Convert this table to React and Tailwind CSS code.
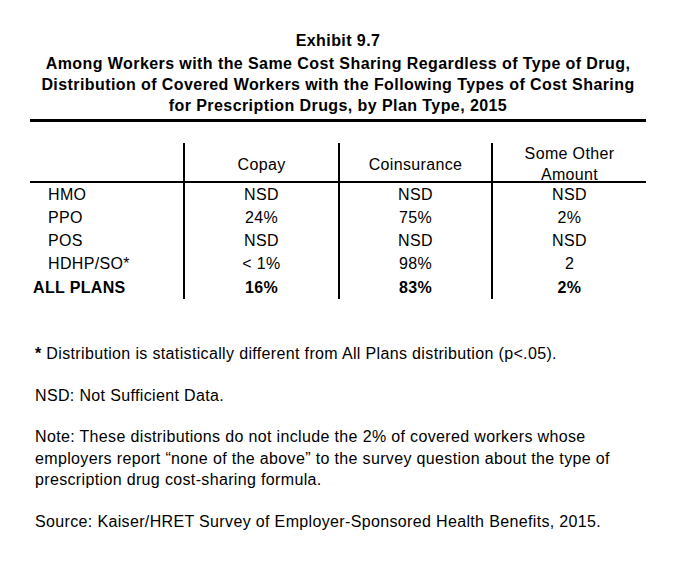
import React from "react";

const rows = [
  { label: "HMO", copay: "NSD", coins: "NSD", other: "NSD" },
  { label: "PPO", copay: "24%", coins: "75%", other: "2%" },
  { label: "POS", copay: "NSD", coins: "NSD", other: "NSD" },
  { label: "HDHP/SO*", copay: "< 1%", coins: "98%", other: "2" },
];

const App = () => {
  return (
    <div
      className="w-[698px] h-[580px] bg-white text-black"
      style={{ fontFamily: '"Liberation Sans", Arial, sans-serif' }}
    >
      <div className="w-[616px] ml-[30px] pt-[30px]">
        {/* Title */}
        <div className="text-center font-bold text-[16px] tracking-[0.42px] leading-[21px]">
          <div>Exhibit 9.7</div>
          <div className="mt-[2px]">
            Among Workers with the Same Cost Sharing Regardless of Type of Drug,
          </div>
          <div>
            Distribution of Covered Workers with the Following Types of Cost Sharing
          </div>
          <div>for Prescription Drugs, by Plan Type, 2015</div>
        </div>
        <div className="mt-[3px] border-t-[3px] border-black" />

        {/* Table */}
        <div className="mt-[21px] text-[16px] tracking-[0.35px] leading-[21px]">
          <div className="grid grid-cols-[153px_155px_153px_155px] h-[40px] border-b-2 border-black">
            <div />
            <div className="border-l-2 border-black flex items-center justify-center">
              Copay
            </div>
            <div className="border-l-2 border-black flex items-center justify-center">
              Coinsurance
            </div>
            <div className="border-l-2 border-black flex flex-col items-center justify-center">
              <span>Some Other</span>
              <span>Amount</span>
            </div>
          </div>
          {rows.map((r) => (
            <div
              key={r.label}
              className="grid grid-cols-[153px_155px_153px_155px] h-[23px]"
            >
              <div className="pl-[18px] flex items-center">{r.label}</div>
              <div className="border-l-2 border-black flex items-center justify-center">
                {r.copay}
              </div>
              <div className="border-l-2 border-black flex items-center justify-center">
                {r.coins}
              </div>
              <div className="border-l-2 border-black flex items-center justify-center">
                {r.other}
              </div>
            </div>
          ))}
          <div className="grid grid-cols-[153px_155px_153px_155px] h-[24px] font-bold">
            <div className="pl-[3px] flex items-center">ALL PLANS</div>
            <div className="border-l-2 border-black flex items-center justify-center">
              16%
            </div>
            <div className="border-l-2 border-black flex items-center justify-center">
              83%
            </div>
            <div className="border-l-2 border-black flex items-center justify-center">
              2%
            </div>
          </div>
        </div>

        {/* Footnotes */}
        <div className="mt-[44px] pl-[5px] text-[16px] tracking-[0.35px] leading-[21.5px] flex flex-col gap-[20px]">
          <p>
            <span className="font-bold">*</span> Distribution is statistically
            different from All Plans distribution (p&lt;.05).
          </p>
          <p>NSD: Not Sufficient Data.</p>
          <p>
            Note: These distributions do not include the 2% of covered workers whose
            <br />
            employers report “none of the above” to the survey question about the type of
            <br />
            prescription drug cost-sharing formula.
          </p>
          <p>
            Source: Kaiser/HRET Survey of Employer-Sponsored Health Benefits, 2015.
          </p>
        </div>
      </div>
    </div>
  );
};

export default App;
